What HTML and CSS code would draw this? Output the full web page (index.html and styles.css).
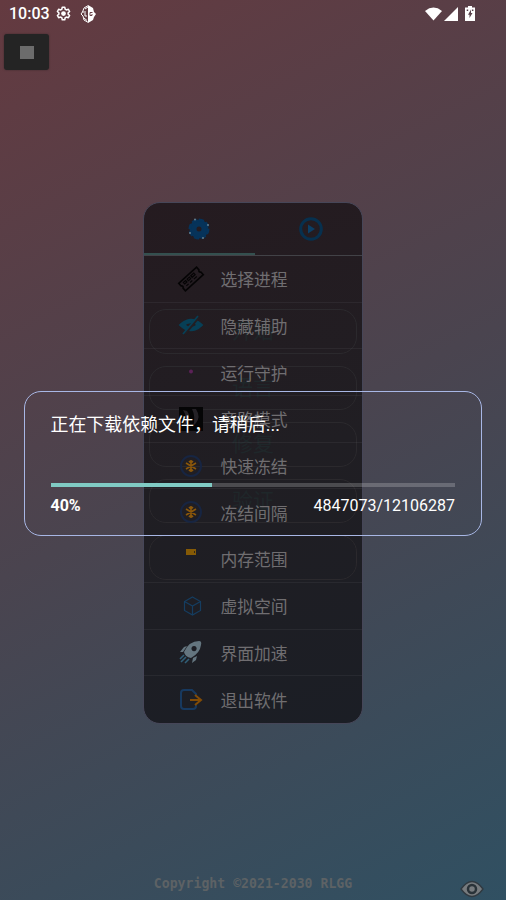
FILE: index.html
```
<!DOCTYPE html>
<html lang="zh-CN">
<head>
<meta charset="utf-8">
<title>RLGG</title>
<link rel="stylesheet" href="styles.css">
</head>
<body>
<div class="screen">
  <header class="status">
    <span class="clock">10:03</span>
    <svg class="gear" viewBox="0 0 24 24"><path fill="none" stroke="#fff" stroke-width="2.4" stroke-linejoin="round" d="M10 2h4l.7 3.2 2 1.1 3.1-1 2 3.5-2.4 2.1v2.2l2.4 2.1-2 3.5-3.1-1-2 1.1L14 22h-4l-.7-3.2-2-1.1-3.1 1-2-3.5 2.4-2.1v-2.2L2.200 8.800l2-3.500 3.100 1 2-1.100z"/><circle cx="12" cy="12" r="3.800" fill="#fff"/></svg>
    <svg class="guard" viewBox="0 0 16 18"><path fill="#fff" d="M8 0l5 3 1 4 2 2-2 3-1 3-5 3z"/><path fill="none" stroke="#fff" d="M8 .7L4 3 2.500 7 1 9l2 2 1 4 4 2.300M2.500 7H6M5 8v3h2M4 13l3 2.500M5 4l3-2"/><path fill="none" stroke="#684047" d="M12.500 7.500H10v3h2V9"/></svg>
    <span class="spacer"></span>
    <svg class="wifi" viewBox="0 0 18 14"><path fill="#fff" d="M0 3.800Q9-3.500 18 3.800L9 14z"/></svg>
    <svg class="signal" viewBox="0 0 14 14"><path fill="#fff" d="M14 0v14H0z"/></svg>
    <svg class="battery" viewBox="0 0 10 15"><path fill="#fff" d="M3 0h4v1.500h3V15H0V1.500h3z"/><path fill="#58414a" d="M6 3.500L3 8.700h1.500V12L7.500 7H6zM1.700 3.500h1.500V5H1.700zm5.200 0h1.500V5H6.900z"/></svg>
  </header>
  <div class="stop"><span></span></div>

  <main class="menu">
    <div class="ghosts" aria-hidden="true"><div>开始</div><div>语言</div><div>修复</div><div>验证</div><div></div></div>
    <nav class="tabs">
      <div class="tab active"><svg viewBox="0 0 24 24"><circle cx="12" cy="12" r="6" fill="none" stroke="#06335a" stroke-width="7"/><circle cx="12" cy="12" r="9" fill="none" stroke="#06335a" stroke-width="3" stroke-dasharray="5 2"/><g fill="#6d8592"><circle cx="8" cy="2.500" r=".9"/><circle cx="21" cy="8" r=".9"/><circle cx="16" cy="21" r=".9"/><circle cx="3" cy="16" r=".9"/></g></svg></div>
      <div class="tab"><svg viewBox="0 0 24 24"><circle cx="12" cy="12" r="10.300" fill="none" stroke="#07304e" stroke-width="3"/><path fill="#0b3f65" d="M9 7.500l7 4.500-7 4.500z"/></svg></div>
    </nav>
    <ul class="list">
      <li><svg viewBox="0 0 24 24"><g transform="rotate(-42 12 12)" fill="none" stroke="#050405" stroke-width="1.600"><path d="M0 7h24v3.500q-2 1.500 0 3V17H0v-3.500q2-1.500 0-3z"/><path stroke-width="1.200" d="M4 9.500h3v2H4zm5 0h3v2H9zm5 0h4v2h-4zM4 14h3m2 0h3m2 0h4"/></g></svg><span>选择进程</span></li>
      <li><svg viewBox="0 0 24 24" fill="none" stroke="#073f56"><path stroke-width="4.500" d="M3 11Q12 3 21 11Q12 19 3 11z"/><path stroke="#231e22" stroke-width="2.500" d="M6 20L20 3"/><path stroke-width="1.800" d="M4 20L19 2"/></svg><span>隐藏辅助</span></li>
      <li><svg viewBox="0 0 24 24"><circle cx="12" cy="11.500" r="2" fill="#5b2157"/></svg><span>运行守护</span></li>
      <li><svg viewBox="0 0 24 24"><path fill="#050506" d="M0 0h24v24H0z"/><path fill="#242126" d="M4 3l4 1q4 5 0 12l-4 3q5-9 0-16zm9-1h4q5 8 0 14l-3 3q3-9-1-17z"/></svg><span>旁路模式</span></li>
      <li><svg viewBox="0 0 24 24"><circle class="ring" cx="12" cy="12" r="10"/><path class="snow" d="M12 6v12M7 9l10 6M17 9L7 15M10 7l2 2 2-2m-4 10l2-2 2 2"/></svg><span>快速冻结</span></li>
      <li><svg viewBox="0 0 24 24"><circle class="ring" cx="12" cy="12" r="10"/><path class="snow" d="M12 6v12M7 9l10 6M17 9L7 15M10 7l2 2 2-2m-4 10l2-2 2 2"/></svg><span>冻结间隔</span></li>
      <li><svg viewBox="0 0 24 24"><path fill="#855a06" d="M7 2h10v6H7z"/><path stroke="#302719" d="M15.500 4v2"/></svg><span>内存范围</span></li>
      <li><svg viewBox="0 0 24 24" fill="none" stroke="#153d60" stroke-width="1.200"><path d="M13.500 3l8 4.500v9l-8 4.500-8-4.500v-9zM5.500 7.500l8 4.500 8-4.500M13.500 12v9"/></svg><span>虚拟空间</span></li>
      <li><svg viewBox="0 0 24 24"><path fill="#64757f" fill-rule="evenodd" d="M5 12Q10 1 20 1q3 0 2 4-1 8-10 13Q6 17 5 12zM15 6a2.600 2.600 0 1 0 .1 0zM5 7l3-1-4 6H1zM14 18l4-2-1 4-4 3z"/><path fill="none" stroke="#315f78" stroke-width="1.600" d="M5 15l-4 4m6-2l-5 5m8-3l-4 4"/></svg><span>界面加速</span></li>
      <li><svg viewBox="0 0 24 24" fill="none"><path stroke="#17395f" stroke-width="2" d="M17 8V6l-4-4H5Q2 2 2 5v13q0 3 3 3h9q3 0 3-3v-1"/><path stroke="#824b05" stroke-width="2" d="M11 12h11m-6-5l6 5-6 5"/></svg><span>退出软件</span></li>
    </ul>
  </main>

  <section class="dialog">
    <h1>正在下载依赖文件，请稍后...</h1>
    <div class="track"><div class="fill" style="width:40%"></div></div>
    <div class="progress-info"><b>40%</b><span>4847073/12106287</span></div>
  </section>
  <footer>Copyright ©2021-2030 RLGG</footer>
  <svg class="eye" viewBox="0 0 24 18"><path fill="#777b7e" stroke="#303940" stroke-width="1.300" d="M1 9q11-15 22 0-11 15-22 0z"/><circle cx="12" cy="9" r="4" fill="#777b7e" stroke="#293238" stroke-width="2.500"/></svg>
</div>
</body>
</html>
```
FILE: styles.css
```
* { box-sizing: border-box; }
body { margin: 0; }
.screen {
  position: relative;
  width: 506px;
  height: 900px;
  overflow: hidden;
  color: #fff;
  font-family: Roboto, "Noto Sans CJK SC", sans-serif;
  background: linear-gradient(153deg, #643a40 0%, #4a444f 50%, #305062 100%);
}
.status { display: flex; align-items: center; height: 27px; padding: 0 31px 0 9px; }
.clock { width: 47px; font-size: 16px; font-weight: 500; line-height: 30px; padding-top: 1px; }
.gear { width: 15px; height: 15px; }
.guard { width: 16px; height: 18px; margin-left: 9px; }
.spacer { flex: 1; }
.wifi { width: 17px; height: 14px; }
.signal { width: 14px; height: 14px; margin-left: 2px; }
.battery { width: 10px; height: 15px; margin-left: 7px; }
.stop { display: flex; align-items: center; justify-content: center; width: 45px; height: 36px; margin: 7px 0 0 4px; border-radius: 3px; background: #242424; box-shadow: 0 0 2px #3b292d; }
.stop span { width: 14px; height: 13px; background: #6c6c6c; }
.menu { position: relative; width: 220px; height: 522px; margin: 132px 0 0 143px; border: 1px solid #464658; border-radius: 17px; background: linear-gradient(165deg, #251b20, #201e23 50%, #1b1e25); overflow: hidden; }
.tabs { position: relative; display: flex; height: 53px; border-bottom: 1px solid #424247; }
.tab { display: flex; flex: 0 0 111px; align-items: center; justify-content: center; }
.tab.active { box-shadow: inset 0 -2px #34504f; }
.tab svg { width: 24px; height: 24px; margin-bottom: 1px; }
.tab.active svg { margin-right: 2px; }
.list { position: relative; margin: 0; padding: 0; list-style: none; }
.list li { display: flex; align-items: center; height: 46.700px; padding-left: 35px; border-bottom: 1px solid rgba(120,120,130,.12); }
.list li:last-child { border: 0; }
.list svg { width: 24px; height: 24px; flex: none; overflow: visible; }
.list span { margin-left: 17.500px; padding-top: 3px; color: #706e71; font-size: 16.800px; line-height: 24px; }
.ring { fill: none; stroke: #172542; stroke-width: 2; }
.snow { fill: none; stroke: #8a570b; stroke-width: 1.700; }
.ghosts { position: absolute; top: 106px; left: 5px; right: 5px; display: grid; gap: 12px; }
.ghosts div { height: 44.500px; border: 1px solid #2b292d; border-radius: 17px; color: #1f272a; font-size: 21px; line-height: 43px; text-align: center; }
.dialog { position: absolute; top: 391px; left: 23.500px; width: 458.500px; height: 144.500px; padding: 18.500px 26px 0; border: 1.500px solid #a8b7e5; border-radius: 17px; }
.dialog h1 { height: 27px; margin: 0; font-size: 17.950px; font-weight: 400; line-height: 27px; white-space: nowrap; }
.track { height: 4px; margin-top: 45px; background: rgba(255,255,255,.2); }
.fill { height: 4px; background: #80cbc4; }
.progress-info { display: flex; justify-content: space-between; font-size: 16px; line-height: 20px; margin-top: 9px; }
.progress-info b { font-weight: 700; }
footer { margin-top: 152px; color: #5d6265; text-align: center; font: bold 13.200px/16px "DejaVu Sans Mono", monospace; }
.eye { position: absolute; top: 880px; left: 460px; width: 24px; height: 18px; }
```
